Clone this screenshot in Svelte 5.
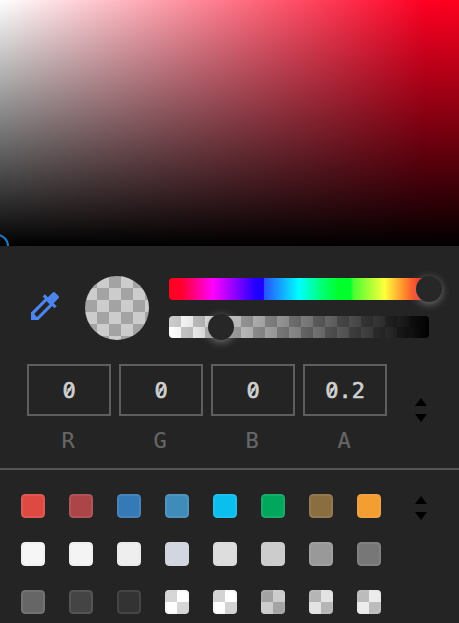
<script>
  const channels = [
    { name: 'R', value: '0' },
    { name: 'G', value: '0' },
    { name: 'B', value: '0' },
    { name: 'A', value: '0.2' },
  ];
  const palette = [
    '#de4a41', '#ab4547', '#3679b7', '#3f8cbb', '#0abfee', '#00a75c', '#8a6e3f', '#f49d30',
    '#f6f6f6', '#f4f4f4', '#eeeeee', '#d2d6e0', '#dddddd', '#cccccc', '#999999', '#777777',
    '#666666', '#444444', '#333333', 'rgba(255,255,255,.2)', 'rgba(255,255,255,.15)',
    'rgba(0,0,0,.2)', 'rgba(0,0,0,.11)', 'rgba(0,0,0,.075)',
  ];
</script>

{#snippet arrows()}
  <svg class="arrows" width="12" height="24" viewBox="0 0 12 24">
    <path d="M0 8L6 0L12 8ZM0 16L6 24L12 16Z" />
  </svg>
{/snippet}

<main>
  <section class="spectrum"><i class="cursor"></i></section>
  <section class="controls">
    <svg class="dropper" viewBox="3 3 18 18">
      <path d="M20.71 5.63l-2.34-2.34c-.39-.39-1.02-.39-1.41 0l-3.12 3.12-1.93-1.91-1.41 1.41 1.42 1.42L3 16.25V21h4.75l8.92-8.92 1.42 1.42 1.41-1.41-1.92-1.92 3.12-3.12c.4-.4.4-1.03.01-1.42zM6.92 19L5 17.08l8.06-8.06 1.92 1.92L6.92 19z" />
    </svg>
    <div class="preview"></div>
    <div class="sliders">
      <div class="bar hue"><i class="knob end"></i></div>
      <div class="bar alpha"><i class="knob"></i></div>
    </div>
  </section>
  <section class="values">
    {#each channels as c}
      <label>
        <span class="field">{#each c.value as ch}<span class:zero={ch === '0'}>{ch}</span>{/each}</span>
        <span class="name">{c.name}</span>
      </label>
    {/each}
    {@render arrows()}
  </section>
  <section class="palette">
    <div class="grid">
      {#each palette as color}
        <div class="swatch"><i style:background-color={color}></i></div>
      {/each}
    </div>
    {@render arrows()}
  </section>
</main>

<style>
  :global(body) { background: #242424; overflow: hidden; }
  main {
    width: 459px; height: 623px; overflow: hidden; background: #242424;
    font-family: "DejaVu Sans Mono", monospace; font-size: 22px;
  }
  .spectrum {
    position: relative; height: 246px; overflow: hidden;
    background: linear-gradient(to top, #000, transparent),
      linear-gradient(to right, #fff, #ff0022 92.5%, #ff001e);
  }
  .cursor {
    position: absolute; left: -15px; bottom: -12px; width: 24px; height: 24px;
    box-sizing: border-box; border: 2px solid #1c78bc; border-radius: 50%;
  }
  .controls { display: flex; height: 118px; box-sizing: border-box; padding: 30px 30px 0 31px; }
  .dropper { width: 28px; height: 28px; margin-top: 16px; fill: #4d85ee; }
  .preview {
    width: 64px; height: 64px; margin-left: 26px; border-radius: 50%;
    background: linear-gradient(#0003, #0003),
      repeating-conic-gradient(#fff 0 25%, #ccc 0 50%) 0 0 / 24px 24px;
  }
  .sliders { width: 260px; margin: 2px 0 0 20px; display: flex; flex-direction: column; gap: 16px; }
  .bar { position: relative; height: 22px; border-radius: 4px; }
  .hue {
    background: linear-gradient(to right, #ff001d 0, #ff0030 5%, #ff00ff 17%, #2000ff 33.5%,
      #1f00ff 36.3%, #2752ff 36.7%, #00ffff 50%, #00ff70 59%, #00ff2a 65.5%, #00ff2a 69.8%,
      #48ff30 71%, #ffff3b 83%, #ff3d24 95.5%, #ff001d);
  }
  .alpha {
    background: linear-gradient(to right, transparent, #000),
      repeating-conic-gradient(#fff 0 25%, #ccc 0 50%) 0 -1px / 24px 24px;
  }
  .knob {
    position: absolute; left: 39px; top: -2px; width: 26px; height: 26px;
    border-radius: 50%; background: #272727; box-shadow: 0 2px 8px #999a;
  }
  .knob.end { left: 247px; }
  .values {
    display: flex; gap: 8px; height: 106px; box-sizing: border-box;
    padding-left: 27px; border-bottom: 2px solid #555;
  }
  label { width: 84px; display: flex; flex-direction: column; align-items: center; }
  .field {
    width: 84px; height: 52px; box-sizing: border-box; border: 2px solid #5e5e5e;
    display: flex; justify-content: center; line-height: 50px; color: #d0d0d0;
    -webkit-text-stroke: .6px #d0d0d0;
  }
  .zero { position: relative; }
  .zero::after {
    content: ""; position: absolute; left: 5.6px; top: 19px; width: 2px; height: 11px;
    background: #d0d0d0; transform: rotate(32deg);
  }
  .name { margin: 12px 2px 0 0; line-height: 26px; color: #666; -webkit-text-stroke: .2px #666; }
  .arrows { display: block; fill: #000; }
  .values .arrows { margin: 34px 0 0 20px; }
  .palette { display: flex; padding: 24px 0 0 21px; }
  .grid { display: grid; grid-template-columns: repeat(8, 24px); gap: 24px; }
  .swatch {
    width: 24px; height: 24px; border-radius: 4px; overflow: hidden;
    background: repeating-conic-gradient(#fff 0 25%, #ccc 0 50%) 0 0 / 24px 24px;
  }
  .swatch:nth-child(-n+19) { background: none; }
  .swatch i {
    display: block; width: 24px; height: 24px; box-sizing: border-box;
    border: 2px solid rgba(205, 205, 205, .12); border-radius: 4px;
  }
  .palette .arrows { margin: 2px 0 0 34px; }
</style>
